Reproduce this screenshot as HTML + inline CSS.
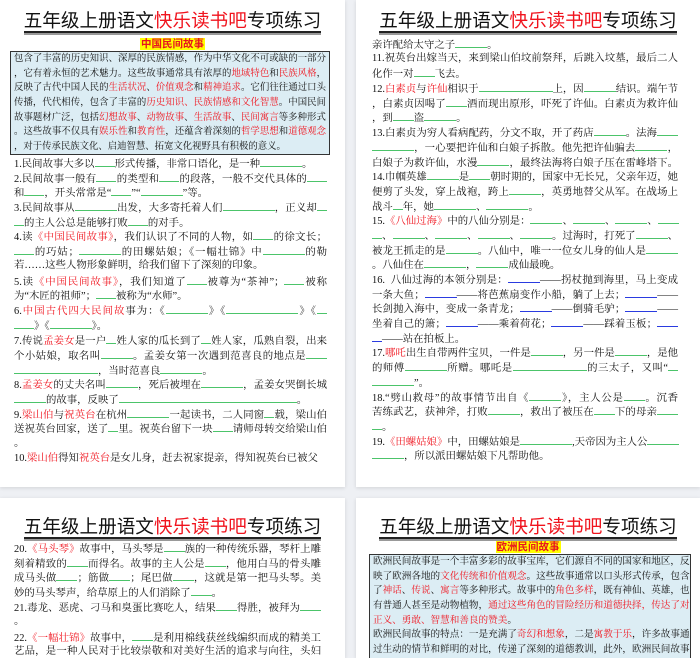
<!DOCTYPE html>
<html><head><meta charset="utf-8">
<style>
*{margin:0;padding:0;box-sizing:border-box}
body{width:700px;height:648px;background:#eef0f4;overflow:hidden;position:relative;font-family:"Liberation Serif","Noto Serif CJK SC",serif;color:#111}
.pg{position:absolute;background:#fff;box-shadow:0 1px 4px rgba(0,0,0,.12);overflow:hidden}
.tt{position:absolute;left:0;right:0;text-align:center;font-family:"Liberation Sans","Noto Sans CJK SC",sans-serif;font-size:18.6px;line-height:22px;color:#111}
.tt span.in{display:inline-block;border-bottom:2px solid #222;box-shadow:0 2px 0 #999;line-height:21px}
.r{color:#f0141e}
.sub{position:absolute;left:0;right:0;text-align:center;font-family:"Liberation Sans","Noto Sans CJK SC",sans-serif;font-weight:bold;font-size:10.5px;line-height:13px}
.sub span{background:#ffff00;color:#e8141e;padding:0 1px}
.box{position:absolute;background:#dcedf4;border:1px solid #333;font-size:9.4px;line-height:14.7px;padding:0 3px}
.txt{position:absolute;font-size:10.4px;line-height:14.7px}
.l{white-space:nowrap;height:14.7px}
.j{text-align:justify;text-align-last:justify}
.b{display:inline-block;border-bottom:1.2px solid #4cc46a;height:11px;vertical-align:baseline}
.u{display:inline-block;border-bottom:1.2px solid #2a3be0;height:11px;vertical-align:baseline}
</style></head><body>

<!-- top-left -->
<div class="pg" style="left:0;top:0;width:345px;height:487px">
<div class="tt" style="top:10px"><span class="in">五年级上册语文<span class="r">快乐读书吧</span>专项练习</span></div>
<div class="sub" style="top:38px"><span>中国民间故事</span></div>
<div class="box" style="left:10px;top:51px;width:320px;height:104px">
<div class="l j">包含了丰富的历史知识、深厚的民族情感，作为中华文化不可或缺的一部分</div>
<div class="l j">，它有着永恒的艺术魅力。这些故事通常具有浓厚的<span class="r">地域特色</span>和<span class="r">民族风格</span>，</div>
<div class="l j">反映了古代中国人民的<span class="r">生活状况</span>、<span class="r">价值观念</span>和<span class="r">精神追求</span>。它们往往通过口头</div>
<div class="l j">传播，代代相传，包含了丰富的<span class="r">历史知识、民族情感和文化智慧</span>。中国民间</div>
<div class="l j">故事题材广泛，包括<span class="r">幻想故事</span>、<span class="r">动物故事</span>、<span class="r">生活故事</span>、<span class="r">民间寓言</span>等多种形式</div>
<div class="l j">。这些故事不仅具有<span class="r">娱乐性</span>和<span class="r">教育性</span>，还蕴含着深刻的<span class="r">哲学思想</span>和<span class="r">道德观念</span></div>
<div class="l">，对于传承民族文化、启迪智慧、拓宽文化视野具有积极的意义。</div>
</div>
<div class="txt" style="left:14px;top:156px;width:313px">
<div class="l">1.民间故事大多以<span class="b" style="width:20px"></span>形式传播，非常口语化，是一种<span class="b" style="width:42px"></span>。</div>
<div class="l j">2.民间故事一般有<span class="b" style="width:20px"></span>的类型和<span class="b" style="width:20px"></span>的段落，一般不交代具体的<span class="b" style="width:20px"></span></div>
<div class="l">和<span class="b" style="width:20px"></span>，开头常常是“<span class="b" style="width:20px"></span>”“<span class="b" style="width:42px"></span>”等。</div>
<div class="l j">3.民间故事从<span class="b" style="width:42px"></span>出发，大多寄托着人们<span class="b" style="width:52px"></span>，正义却<span class="b" style="width:10px"></span></div>
<div class="l"><span class="b" style="width:10px"></span>的主人公总是能够打败<span class="b" style="width:20px"></span>的对手。</div>
<div class="l j">4.读<span class="r">《中国民间故事》</span>，我们认识了不同的人物，如<span class="b" style="width:20px"></span>的徐文长；</div>
<div class="l j"><span class="b" style="width:20px"></span>的巧姑；<span class="b" style="width:42px"></span>的田螺姑娘；《一幅壮锦》中<span class="b" style="width:42px"></span>的勒</div>
<div class="l">若……这些人物形象鲜明，给我们留下了深刻的印象。</div>
<div class="l j">5.读<span class="r">《中国民间故事》</span>，我们知道了<span class="b" style="width:20px"></span>被尊为“茶神”；<span class="b" style="width:20px"></span>被称</div>
<div class="l">为“木匠的祖师”；<span class="b" style="width:20px"></span>被称为“水师”。</div>
<div class="l j">6.<span class="r">中国古代四大民间故</span>事为：《<span class="b" style="width:42px"></span>》《<span class="b" style="width:72px"></span>》《<span class="b" style="width:10px"></span></div>
<div class="l"><span class="b" style="width:20px"></span>》《<span class="b" style="width:42px"></span>》。</div>
<div class="l j" style="margin-top:1px">7.传说<span class="r">孟姜女</span>是一户<span class="b" style="width:10px"></span>姓人家的瓜长到了<span class="b" style="width:10px"></span>姓人家，瓜熟自裂，出来</div>
<div class="l j">个小姑娘，取名叫<span class="b" style="width:32px"></span>。孟姜女第一次遇到范喜良的地点是<span class="b" style="width:21px"></span></div>
<div class="l"><span class="b" style="width:84px"></span>，当时范喜良<span class="b" style="width:42px"></span>。</div>
<div class="l j">8.<span class="r">孟姜女</span>的丈夫名叫<span class="b" style="width:32px"></span>，死后被埋在<span class="b" style="width:42px"></span>，孟姜女哭倒长城</div>
<div class="l"><span class="b" style="width:32px"></span>的故事，反映了<span class="b" style="width:178px"></span>。</div>
<div class="l j">9.<span class="r">梁山伯</span>与<span class="r">祝英台</span>在杭州<span class="b" style="width:42px"></span>一起读书，二人同窗<span class="b" style="width:10px"></span>载，梁山伯</div>
<div class="l j">送祝英台回家，送了<span class="b" style="width:10px"></span>里。祝英台留下一块<span class="b" style="width:20px"></span>请师母转交给梁山伯</div>
<div class="l" style="margin-top:1px">。</div>
<div class="l">10.<span class="r">梁山伯</span>得知<span class="r">祝英台</span>是女儿身，赶去祝家提亲，得知祝英台已被父</div>
</div>
</div>

<!-- top-right -->
<div class="pg" style="left:356px;top:0;width:344px;height:487px">
<div class="tt" style="top:10px"><span class="in">五年级上册语文<span class="r">快乐读书吧</span>专项练习</span></div>
<div class="txt" style="left:16px;top:37px;width:306px">
<div class="l">亲许配给太守之子<span class="b" style="width:32px"></span>。</div>
<div class="l j">11.祝英台出嫁当天，来到梁山伯坟前祭拜，后跳入坟墓，最后二人</div>
<div class="l">化作一对<span class="b" style="width:21px"></span>飞去。</div>
<div class="l j">12.<span class="r">白素贞</span>与<span class="r">许仙</span>相识于<span class="b" style="width:74px"></span>上，因<span class="b" style="width:32px"></span>结识。端午节</div>
<div class="l j">，白素贞因喝了<span class="b" style="width:21px"></span>酒而现出原形，吓死了许仙。白素贞为救许仙</div>
<div class="l">，到<span class="b" style="width:21px"></span>盗<span class="b" style="width:32px"></span>。</div>
<div class="l j">13.白素贞为穷人看病配药，分文不取，开了药店<span class="b" style="width:32px"></span>。法海<span class="b" style="width:21px"></span></div>
<div class="l j"><span class="b" style="width:42px"></span>，一心要把许仙和白娘子拆散。他先把许仙骗去<span class="b" style="width:32px"></span>，</div>
<div class="l j">白娘子为救许仙，水漫<span class="b" style="width:32px"></span>，最终法海将白娘子压在雷峰塔下。</div>
<div class="l j">14.巾帼英雄<span class="b" style="width:32px"></span>是<span class="b" style="width:21px"></span>朝时期的，国家中无长兄，父亲年迈，她</div>
<div class="l j">便剪了头发，穿上战袍，跨上<span class="b" style="width:32px"></span>，英勇地替父从军。在战场上</div>
<div class="l">战斗<span class="b" style="width:10px"></span>年，她<span class="b" style="width:42px"></span>、<span class="b" style="width:42px"></span>。</div>
<div class="l j">15.<span class="r">《八仙过海》</span>中的八仙分别是：<span class="b" style="width:32px"></span>、<span class="b" style="width:32px"></span>、<span class="b" style="width:32px"></span>、<span class="b" style="width:21px"></span></div>
<div class="l j"><span class="b" style="width:10px"></span>、<span class="b" style="width:32px"></span>、<span class="b" style="width:32px"></span>、<span class="b" style="width:32px"></span>、<span class="b" style="width:32px"></span>。过海时，打死了<span class="b" style="width:32px"></span>、</div>
<div class="l j">被龙王抓走的是<span class="b" style="width:32px"></span>。八仙中，唯一一位女儿身的仙人是<span class="b" style="width:32px"></span></div>
<div class="l">。八仙住在<span class="b" style="width:42px"></span>，<span class="b" style="width:32px"></span>成仙最晚。</div>
<div class="l j">16.&nbsp; 八仙过海的本领分别是：<span class="u" style="width:32px"></span>——拐杖抛到海里，马上变成</div>
<div class="l j">一条大鱼；<span class="u" style="width:32px"></span>——将芭蕉扇变作小船，躺了上去；<span class="u" style="width:32px"></span>——</div>
<div class="l j">长剑抛入海中，变成一条青龙；<span class="u" style="width:32px"></span>——倒骑毛驴；<span class="u" style="width:32px"></span>——</div>
<div class="l j">坐着自己的箫；<span class="u" style="width:32px"></span>——乘着荷花；<span class="u" style="width:32px"></span>——踩着玉板；<span class="u" style="width:21px"></span></div>
<div class="l"><span class="u" style="width:10px"></span>——站在拍板上。</div>
<div class="l j">17.<span class="r">哪吒</span>出生自带两件宝贝，一件是<span class="b" style="width:32px"></span>，另一件是<span class="b" style="width:32px"></span>，是他</div>
<div class="l j">的师傅<span class="b" style="width:42px"></span>所赠。哪吒是<span class="b" style="width:74px"></span>的三太子，又叫“<span class="b" style="width:10px"></span></div>
<div class="l"><span class="b" style="width:42px"></span>”。</div>
<div class="l j">18.“劈山救母”的故事情节出自《<span class="b" style="width:32px"></span>》，主人公是<span class="b" style="width:21px"></span>。沉香</div>
<div class="l j">苦练武艺，获神斧，打败<span class="b" style="width:32px"></span>，救出了被压在<span class="b" style="width:21px"></span>下的母亲<span class="b" style="width:21px"></span></div>
<div class="l"><span class="b" style="width:10px"></span>。</div>
<div class="l">19.<span class="r">《田螺姑娘》</span>中，田螺姑娘是<span class="b" style="width:52px"></span>,天帝因为主人公<span class="b" style="width:32px"></span></div>
<div class="l"><span class="b" style="width:32px"></span>，所以派田螺姑娘下凡帮助他。</div>
</div>
</div>

<!-- bottom-left -->
<div class="pg" style="left:0;top:498px;width:345px;height:160px">
<div class="tt" style="top:18px"><span class="in">五年级上册语文<span class="r">快乐读书吧</span>专项练习</span></div>
<div class="txt" style="left:14px;top:43px;width:307px">
<div class="l j">20.<span class="r">《马头琴》</span>故事中，马头琴是<span class="b" style="width:21px"></span>族的一种传统乐器，琴杆上雕</div>
<div class="l j">刻着精致的<span class="b" style="width:21px"></span>而得名。故事的主人公是<span class="b" style="width:21px"></span>，他用白马的骨头雕</div>
<div class="l j">成马头做<span class="b" style="width:21px"></span>；筋做<span class="b" style="width:21px"></span>；尾巴做<span class="b" style="width:21px"></span>，这就是第一把马头琴。美</div>
<div class="l">妙的马头琴声，给草原上的人们消除了<span class="b" style="width:21px"></span>。</div>
<div class="l j">21.毒龙、恶虎、刁马和臭蛋比赛吃人，结果<span class="b" style="width:21px"></span>得胜，被拜为<span class="b" style="width:21px"></span></div>
<div class="l" style="margin-top:1px">。</div>
<div class="l j">22.<span class="r">《一幅壮锦》</span>故事中，<span class="b" style="width:21px"></span>是利用棉线获丝线编织而成的精美工</div>
<div class="l j">艺品，是一种人民对于比较崇敬和对美好生活的追求与向往，头妇</div>
</div>
</div>

<!-- bottom-right -->
<div class="pg" style="left:356px;top:498px;width:344px;height:160px">
<div class="tt" style="top:18px"><span class="in">五年级上册语文<span class="r">快乐读书吧</span>专项练习</span></div>
<div class="sub" style="top:43px"><span>欧洲民间故事</span></div>
<div class="box" style="left:13px;top:56px;width:322px;height:110px;font-size:9.6px">
<div class="l j">欧洲民间故事是一个丰富多彩的故事宝库，它们源自不同的国家和地区，反</div>
<div class="l j">映了欧洲各地的<span class="r">文化传统和价值观念</span>。这些故事通常以口头形式传承，包含</div>
<div class="l j">了<span class="r">神话</span>、<span class="r">传说</span>、<span class="r">寓言</span>等多种形式。故事中的<span class="r">角色多样</span>，既有神仙、英雄，也</div>
<div class="l j">有普通人甚至是动物植物，<span class="r">通过这些角色的冒险经历和道德抉择，传达了对</span></div>
<div class="l r">正义、勇敢、智慧和善良的赞美<span style="color:#111">。</span></div>
<div class="l j">欧洲民间故事的特点：一是充满了<span class="r">奇幻和想象</span>，二是<span class="r">寓教于乐</span>，许多故事通</div>
<div class="l j">过生动的情节和鲜明的对比，传递了深刻的道德教训，此外，欧洲民间故事</div>
</div>
</div>
</body></html>
